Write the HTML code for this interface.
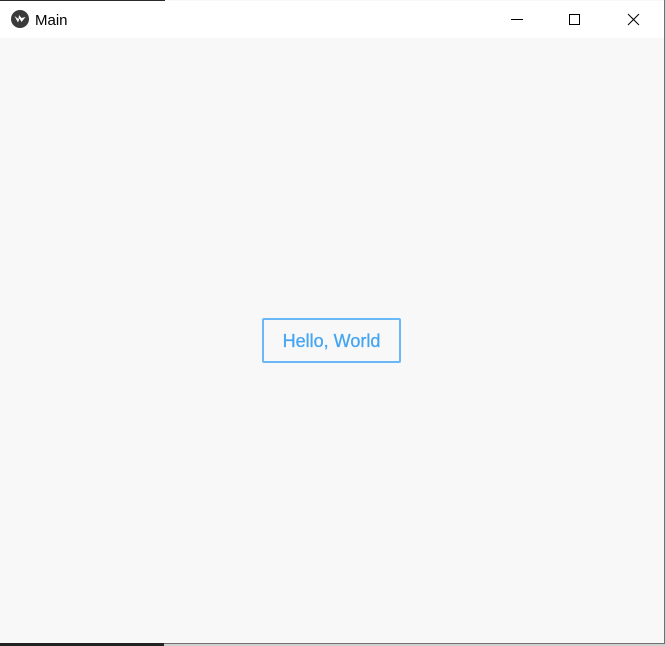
<!DOCTYPE html>
<html><head><meta charset="utf-8"><style>
html,body{margin:0;padding:0;width:666px;height:646px;overflow:hidden;background:#d0d0d0;font-family:"Liberation Sans",sans-serif;}
.topdark{position:absolute;left:0;top:0;width:165px;height:1px;background:#2a2a2a}
.botdark{position:absolute;left:0;top:643px;width:164px;height:3px;background:#222}
.win{position:absolute;left:0;top:0;background:#f8f8f8;border-right:1px solid #707070;border-bottom:1px solid #707070;box-sizing:border-box;width:665px;height:644px}
.title{position:absolute;left:0;top:1px;width:664px;height:37px;background:#fff}
.logo{position:absolute;left:11px;top:9px;width:18px;height:18px;border-radius:50%;background:#3a3a3a}
.t{position:absolute;left:35px;top:11px;font-size:15px;color:#000;font-family:"Liberation Sans","DejaVu Sans",sans-serif}
.btn{position:absolute;left:262px;top:318px;width:139px;height:45px;box-sizing:border-box;border:2px solid #6ab8f7;border-radius:2px;color:#45a5f3;font-size:18px;text-align:center;line-height:42px;background:#f8f8f8;-webkit-text-stroke:0.3px #45a5f3}
</style></head><body>
<div class="win"></div>
<div class="topdark"></div>
<div class="botdark"></div>
<div class="title">
<div class="logo"><svg width="18" height="18" viewBox="0 0 18 18"><path d="M3.5 6 L7 12.5 L8.5 8.5 L10.5 12 L14.5 7 L10.5 8 L8 5 L7.5 9 Z" fill="#fff"/></svg></div>
<div class="t">Main</div>
<svg style="position:absolute;left:480px;top:0" width="184" height="37" viewBox="0 0 184 37">
<line x1="31" y1="18.5" x2="43" y2="18.5" stroke="#000" stroke-width="1"/>
<rect x="89.5" y="13.5" width="10" height="10" fill="none" stroke="#000" stroke-width="1"/>
<line x1="148" y1="13" x2="159" y2="24" stroke="#000" stroke-width="1"/>
<line x1="159" y1="13" x2="148" y2="24" stroke="#000" stroke-width="1"/>
</svg>
</div>
<div class="btn">Hello, World</div>
</body></html>
